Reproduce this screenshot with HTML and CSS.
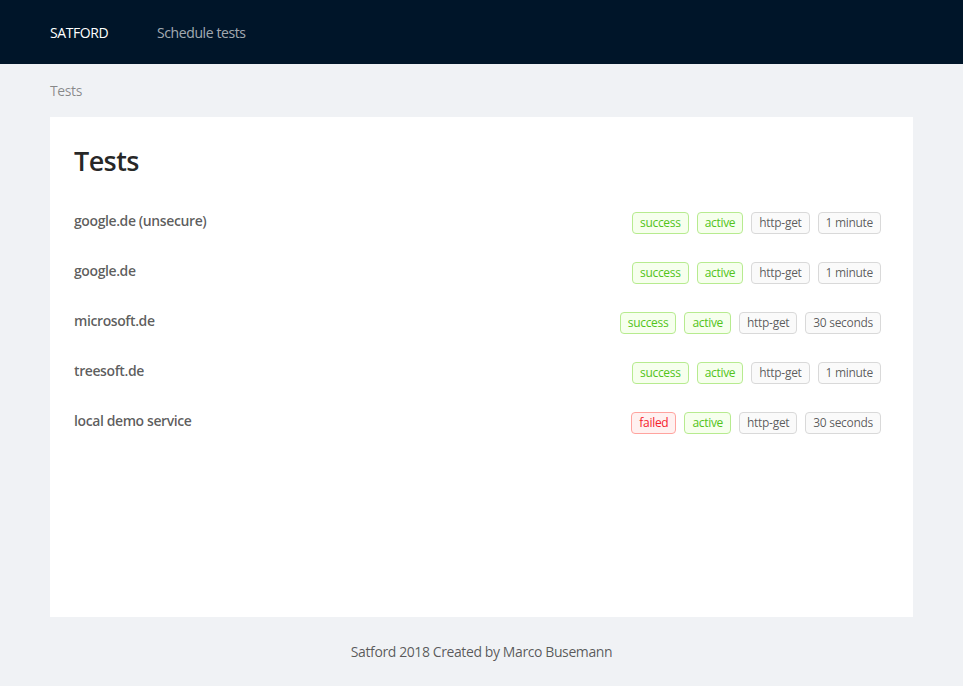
FILE: index.html
```html
<!DOCTYPE html>
<html>
<head>
<meta charset="utf-8">
<link rel="stylesheet" href="styles.css">
</head>
<body>
<div class="layout">
  <header class="header">
    <div class="logo">SATFORD</div>
    <nav class="menu"><span class="menu-item">Schedule tests</span></nav>
  </header>
  <main class="main">
    <div class="breadcrumb">Tests</div>
    <section class="content">
      <h2 class="title">Tests</h2>
      <ul class="list">
        <li class="item"><span class="name">google.de (unsecure)</span><span class="tags"><span class="tag tag-green">success</span><span class="tag tag-green">active</span><span class="tag">http-get</span><span class="tag">1 minute</span></span></li>
        <li class="item"><span class="name">google.de</span><span class="tags"><span class="tag tag-green">success</span><span class="tag tag-green">active</span><span class="tag">http-get</span><span class="tag">1 minute</span></span></li>
        <li class="item"><span class="name">microsoft.de</span><span class="tags"><span class="tag tag-green">success</span><span class="tag tag-green">active</span><span class="tag">http-get</span><span class="tag">30 seconds</span></span></li>
        <li class="item"><span class="name">treesoft.de</span><span class="tags"><span class="tag tag-green">success</span><span class="tag tag-green">active</span><span class="tag">http-get</span><span class="tag">1 minute</span></span></li>
        <li class="item"><span class="name">local demo service</span><span class="tags"><span class="tag tag-red">failed</span><span class="tag tag-green">active</span><span class="tag">http-get</span><span class="tag">30 seconds</span></span></li>
      </ul>
    </section>
  </main>
  <footer class="footer">Satford 2018 Created by Marco Busemann</footer>
</div>
</body>
</html>
```

FILE: styles.css
```css
html { background: #fff; }
body {
  margin: 0;
  font-family: "Open Sans", "Noto Sans", sans-serif;
  font-size: 14px;
  line-height: 1.5;
  letter-spacing: -0.4px;
  color: rgba(0,0,0,0.65);
}
.layout { background: #f0f2f5; }
.header {
  height: 64px;
  background: #001529;
  padding: 0 50px;
  display: flex;
  align-items: center;
}
.logo { color: #fff; width: 107px; }
.menu-item { color: rgba(255,255,255,0.65); }
.main { padding: 0 50px; }
.breadcrumb {
  padding: 16px 0;
  line-height: 21px;
  color: rgba(0,0,0,0.45);
}
.content {
  background: #fff;
  height: 500px;
  box-sizing: border-box;
  padding: 24px;
}
.title {
  margin: 0 0 15px;
  font-size: 27px;
  line-height: 40px;
  font-weight: 600;
  letter-spacing: -0.6px;
  color: rgba(0,0,0,0.85);
}
.list { list-style: none; margin: 0; padding: 0; }
.item {
  height: 50px;
  display: flex;
  align-items: center;
  justify-content: space-between;
}
.name { font-weight: 600; margin-top: -2px; }
.tags { display: flex; margin-top: 4px; }
.tag {
  height: 22px;
  line-height: 20px;
  box-sizing: border-box;
  padding: 0 7px;
  font-size: 12px;
  letter-spacing: -0.3px;
  border: 1px solid #d9d9d9;
  border-radius: 4px;
  background: #fafafa;
  margin-right: 8px;
  color: rgba(0,0,0,0.65);
}
.tag-green { color: #52c41a; background: #f6ffed; border-color: #b7eb8f; }
.tag-red { color: #f5222d; background: #fff1f0; border-color: #ffa39e; }
.footer {
  padding: 24px 50px;
  text-align: center;
  line-height: 21px;
}
```
